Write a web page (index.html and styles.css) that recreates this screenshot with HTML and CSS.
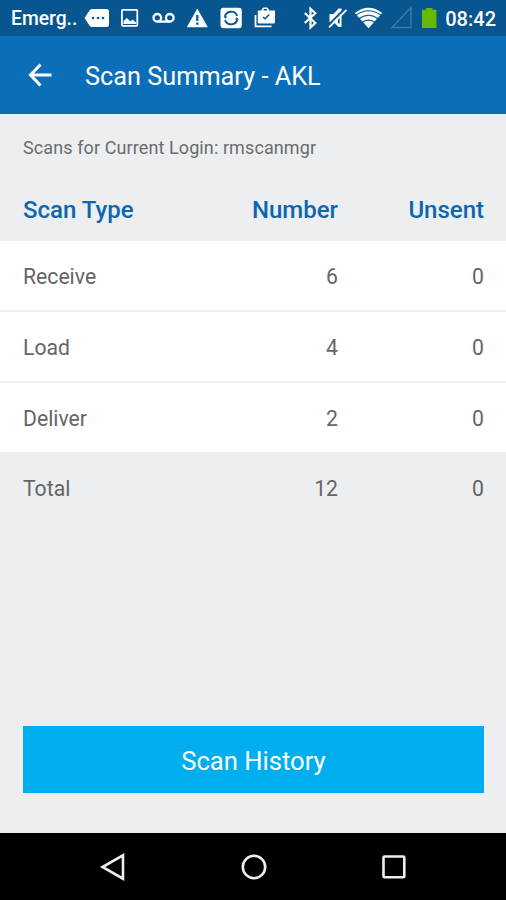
FILE: index.html
```html
<!DOCTYPE html>
<html lang="en">
<head>
<meta charset="utf-8">
<title>Scan Summary</title>
<link rel="stylesheet" href="styles.css">
</head>
<body>
<div class="screen">
  <div class="status">
    <span class="carrier">Emerg..</span>
    <svg width="34" height="36" viewBox="80 0 34 36"><path class="fill" d="M84.500 18l5-7.500q1-1.500 2.500-1.500h14.500q2.500 0 2.500 2.500v13q0 2.500-2.500 2.500h-14.500q-1.500 0-2.500-1.500z"/><g class="cut"><circle cx="93" cy="18" r="1.300"/><circle cx="98" cy="18" r="1.300"/><circle cx="103" cy="18" r="1.300"/></g></svg>
    <svg width="33" height="36" viewBox="114 0 33 36"><rect class="line" x="121.900" y="9.900" width="15.400" height="16" rx=".8"/><path class="fill" d="M123.500 24v-3l3.500-3 3.500 3.500 2-2 3.500 3V24z"/></svg>
    <svg width="34" height="36" viewBox="147 0 34 36"><g class="line vm"><circle cx="157.300" cy="17.800" r="3.800"/><circle cx="169.800" cy="17.800" r="3.800"/><path d="M157.300 21.600h12.500"/></g></svg>
    <svg width="34" height="36" viewBox="181 0 34 36"><path class="fill" d="M197.300 8.500l10.500 18.700h-21z"/><path class="cut" d="M196.200 15h2.200v6h-2.200zM196.200 22.500h2.200v2.300h-2.200z"/></svg>
    <svg width="33" height="36" viewBox="215 0 33 36"><rect class="fill" x="220.500" y="7.700" width="21.300" height="20.500" rx="3"/><path class="sync" d="M224.800 16.800a6.500 6.500 0 0 1 12.400-1M237.400 19.200a6.500 6.500 0 0 1-12.400 1"/><path class="cut" d="M223.500 16.500h4l-2 2.300zM238.800 19.500h-4l2-2.300z"/></svg>
    <svg width="34" height="36" viewBox="248 0 34 36"><path class="fill" fill-rule="evenodd" d="M257.800 10.500h4V9l1.700-1.600h3.600L268.800 9v1.500h6.200V22q0 1.500-1.500 1.500h-14.200q-1.500 0-1.500-1.500zM263.600 10.500h3.400V9h-3.400z"/><path class="line" d="M255.500 15v11.300h16"/><path class="sync check" d="M263 17l2 1.800 4.300-4.300"/></svg>
    <svg class="bt" width="28" height="36" viewBox="296 0 28 36"><path class="line thick" d="M304.800 13l10.500 10-4.800 4.500V8.700l4.800 4.500-10.500 9.800"/></svg>
    <svg width="28" height="36" viewBox="324 0 28 36"><path class="fill" d="M329.500 14h4l5-5.500h3v18.500h-3L333.500 22h-4z"/><path class="ring" d="M338.800 13.500v10"/><path class="gap" d="M327.500 26L345 8.500"/><path class="line slash" d="M329 27.300L346.500 9.800"/></svg>
    <svg width="34" height="36" viewBox="352 0 34 36"><path class="fill" d="M354.800 13Q368.500 2.500 382.200 13L368.500 28.200z"/><g class="waves"><path d="M355.500 15.500q13-9.500 26 0M358.500 19q10-7.500 20 0M361.800 22.600q6.700-5 13.400 0"/></g></svg>
    <svg width="30" height="36" viewBox="386 0 30 36"><path class="signal" d="M411 7.500v20h-19z"/></svg>
    <svg width="26" height="36" viewBox="416 0 26 36"><path class="battery" d="M426 8h6.500v1.700h4V28H422V9.700h4z"/></svg>
    <span class="clock">08:42</span>
  </div>
  <header class="appbar">
    <svg width="24" height="24" viewBox="0 0 24 24"><path d="M12.500 1.500L2.500 12l10 10.500M2.500 12h21"/></svg>
    <h1>Scan Summary - AKL</h1>
  </header>
  <main>
    <p class="login">Scans for Current Login: rmscanmgr</p>
    <div class="row head"><span>Scan Type</span><span>Number</span><span>Unsent</span></div>
    <div class="row item"><span>Receive</span><span>6</span><span>0</span></div>
    <div class="row item"><span>Load</span><span>4</span><span>0</span></div>
    <div class="row item last"><span>Deliver</span><span>2</span><span>0</span></div>
    <div class="row total"><span>Total</span><span>12</span><span>0</span></div>
    <button class="history">Scan History</button>
  </main>
  <nav>
    <svg width="28" height="28" viewBox="0 0 28 28"><path d="M24 2.300v23.400L3.500 14z"/></svg>
    <svg width="28" height="28" viewBox="0 0 28 28"><circle cx="14" cy="14" r="11.200"/></svg>
    <svg width="28" height="28" viewBox="0 0 28 28"><rect x="3.500" y="3.500" width="20.800" height="20.800" rx="1"/></svg>
  </nav>
</div>
</body>
</html>
```
FILE: styles.css
```css
* { box-sizing: border-box; }
body { margin: 0; font-family: Roboto, "Liberation Sans", sans-serif; }
svg { display: block; flex: none; }
.screen { width: 506px; height: 900px; display: flex; flex-direction: column; background: #eceef0; }

.status { height: 36px; flex: none; display: flex; background: #07568f; color: #fff; line-height: 38px; white-space: nowrap; }
.carrier { width: 69px; margin-left: 11px; font-size: 19.3px; font-weight: 500; }
.clock { width: 54px; text-align: right; font-size: 20px; font-weight: 500; }
.bt { margin-left: 14px; }
.fill { fill: #fff; }
.cut { fill: #07568f; }
.line { fill: none; stroke: #fff; stroke-width: 1.8; }
.vm { stroke-width: 2.3; }
.thick { stroke-width: 2.2; }
.sync { fill: none; stroke: #07568f; stroke-width: 1.9; }
.check { stroke-width: 1.5; }
.ring { stroke: #07568f; stroke-width: 1.6; }
.gap { stroke: #07568f; stroke-width: 1.8; }
.slash { stroke-width: 1.8; }
.waves { fill: none; stroke: #07568f; stroke-width: 1.2; }
.signal { fill: none; stroke: #397cae; stroke-width: 1.4; }
.battery { fill: #66b800; }

.appbar { height: 78px; flex: none; display: flex; align-items: center; gap: 33px; padding-left: 28px; background: #0a6fb8; }
.appbar svg { fill: none; stroke: #fff; stroke-width: 3; }
h1 { margin: 4px 0 0; font-size: 25.3px; line-height: 30px; font-weight: 400; color: #fff; white-space: nowrap; }

main { flex: 1; display: flex; flex-direction: column; }
.login { margin: 22px 23px 0; height: 42px; font-size: 18px; letter-spacing: 0.1px; line-height: 24px; color: #6b6c6e; }
.row { display: grid; grid-template-columns: 1fr 125px 146px; align-items: center; padding: 0 22px 0 23px; font-size: 21.2px; color: #646567; }
.row span + span { text-align: right; }
.head { height: 63px; font-size: 24px; font-weight: 500; color: #0d66b0; }
.item { height: 71px; padding-top: 2px; background: #fff; border-bottom: 2px solid #eff0f1; }
.last { height: 69px; border-bottom: 0; }
.total { height: 73px; }
.history { margin: auto 22px 40px 23px; height: 67px; padding: 2px 0 0; border: 0; background: #00aeef; color: #fff; font: 400 25.6px Roboto, "Liberation Sans", sans-serif; }

nav { height: 67px; flex: none; display: flex; justify-content: center; align-items: center; gap: 112.5px; padding-left: 1px; background: #000; }
nav svg { fill: none; stroke: #eee; stroke-width: 2.6; }
```
